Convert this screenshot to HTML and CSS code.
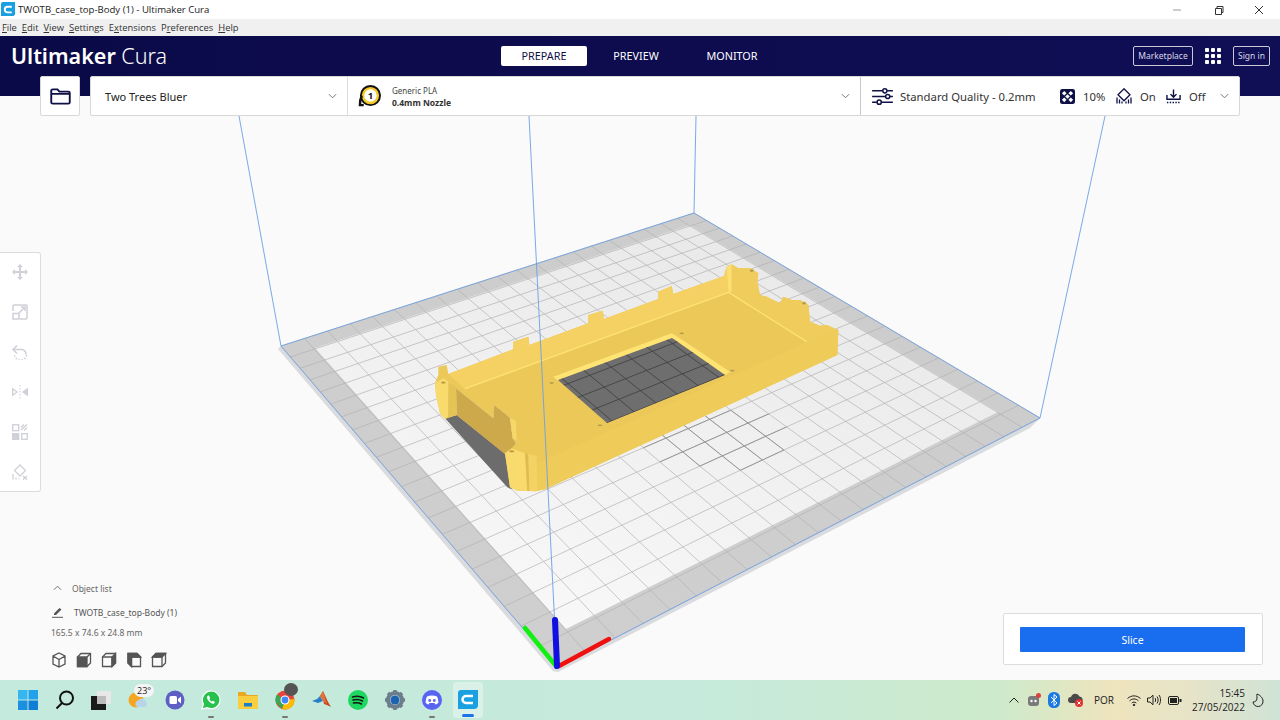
FILE: index.html
```html
<!DOCTYPE html>
<html lang="en">
<head>
<meta charset="utf-8">
<title>TWOTB_case_top-Body (1) - Ultimaker Cura</title>
<link rel="stylesheet" href="styles.css">
</head>
<body>
<div class="titlebar">
  <svg class="title-icon" viewBox="0 0 16 16" width="15" height="15"><path d="M2 0h13v12a3 3 0 0 1-3 3H0V2a2 2 0 0 1 2-2z" fill="#1aa0e0"/><path d="M11.5 5H7a2.5 2.5 0 0 0 0 6h4.5" fill="none" stroke="#fff" stroke-width="2"/></svg>
  <span class="title-text">TWOTB_case_top-Body (1) - Ultimaker Cura</span>
  <div class="winctl">
    <svg viewBox="0 0 10 10" width="10" height="10"><path d="M1 5h8" stroke="#9a9a9a" fill="none"/></svg>
    <svg class="ctl-restore" viewBox="0 0 10 10" width="10" height="10"><path d="M1.500 3.500h6v6h-6zM3 3.500V1.500h6v6H7.500" stroke="#333" fill="none"/></svg>
    <svg viewBox="0 0 10 10" width="10" height="10"><path d="M1 1l8 8M9 1l-8 8" stroke="#333" fill="none"/></svg>
  </div>
</div>
<nav class="menubar">
  <span><u>F</u>ile</span><span><u>E</u>dit</span><span><u>V</u>iew</span><span><u>S</u>ettings</span><span>E<u>x</u>tensions</span><span>P<u>r</u>eferences</span><span><u>H</u>elp</span>
</nav>
<header class="header">
  <div class="header-row">
    <div class="logo"><b>Ultimaker</b> <span>Cura</span></div>
    <div class="tabs">
      <span class="tab tab-active">PREPARE</span>
      <span class="tab tab-preview">PREVIEW</span>
      <span class="tab tab-monitor">MONITOR</span>
    </div>
    <div class="header-right">
      <span class="outline-btn market">Marketplace</span>
      <svg class="apps" viewBox="0 0 16 16" width="16" height="16" fill="#fff"><rect x="0" y="0" width="4" height="4" rx="1"/><rect x="6" y="0" width="4" height="4" rx="1"/><rect x="12" y="0" width="4" height="4" rx="1"/><rect x="0" y="6" width="4" height="4" rx="1"/><rect x="6" y="6" width="4" height="4" rx="1"/><rect x="12" y="6" width="4" height="4" rx="1"/><rect x="0" y="12" width="4" height="4" rx="1"/><rect x="6" y="12" width="4" height="4" rx="1"/><rect x="12" y="12" width="4" height="4" rx="1"/></svg>
      <span class="outline-btn signin">Sign in</span>
    </div>
  </div>
  <div class="toolbar">
    <div class="folder-btn">
      <svg viewBox="0 0 22 18" width="21" height="17"><path d="M1.200 15V3a1.600 1.600 0 0 1 1.600-1.600h5l2 2.400h9.400a1.600 1.600 0 0 1 1.600 1.600V15a1.600 1.600 0 0 1-1.600 1.600H2.800A1.600 1.600 0 0 1 1.200 15zM1.200 6.200h19.600" fill="none" stroke="#0f1045" stroke-width="2"/></svg>
    </div>
    <div class="mainbar">
      <div class="cell cell-machine">
        <span class="machine-name">Two Trees Bluer</span>
        <svg class="chev" viewBox="0 0 10 6" width="9" height="6"><path d="M1 1l4 4 4-4" fill="none" stroke="#666"/></svg>
      </div>
      <div class="cell cell-material">
        <svg class="spool" viewBox="0 0 24 24" width="23" height="23"><circle cx="13" cy="11" r="10" fill="#f7c928" stroke="#111" stroke-width="2"/><path d="M4 11c-1.500 3-2 6-2 10h4" fill="none" stroke="#111" stroke-width="2.500"/><circle cx="13" cy="11" r="6.500" fill="#fff"/><text x="13" y="14.800" class="spool-num">1</text></svg>
        <div class="material-text"><span class="mat-name">Generic PLA</span><b class="mat-nozzle">0.4mm Nozzle</b></div>
        <svg class="chev chev-end" viewBox="0 0 10 6" width="9" height="6"><path d="M1 1l4 4 4-4" fill="none" stroke="#666"/></svg>
      </div>
      <div class="cell cell-settings">
        <svg class="ic-quality" viewBox="0 0 22 18" width="21" height="17" fill="none" stroke="#0f1045" stroke-width="1.600"><path d="M0 3h11M16 3h6M0 9h14M19 9h3M0 15h5M10 15h12"/><circle cx="13.500" cy="3" r="2.200"/><circle cx="16.500" cy="9" r="2.200"/><circle cx="7.500" cy="15" r="2.200"/></svg>
        <span class="quality">Standard Quality - 0.2mm</span>
        <svg class="ic-infill" viewBox="0 0 16 16" width="15" height="15"><rect width="16" height="16" rx="2.500" fill="#0f1045"/><g fill="#fff"><path d="M4.500 2l2.500 2.500L4.500 7 2 4.500zM11.500 2L14 4.500 11.500 7 9 4.500zM8 5.500L10.500 8 8 10.500 5.500 8zM4.500 9L7 11.500 4.500 14 2 11.500zM11.500 9l2.500 2.500-2.500 2.500L9 11.500z"/></g></svg>
        <span class="val val-infill">10%</span>
        <svg class="ic-support" viewBox="0 0 16 16" width="16" height="16" fill="none" stroke="#0f1045" stroke-width="1.300"><path d="M8 .8l6 6-6 6-6-6z"/><path d="M1 15.500V9.500M3.500 15.500v-4M6 15.500v-2M10 15.500v-2M12.500 15.500v-4M15 15.500V9.500"/></svg>
        <span class="val val-support">On</span>
        <svg class="ic-adhesion" viewBox="0 0 16 16" width="15" height="16" fill="none" stroke="#0f1045" stroke-width="1.500"><path d="M8 1v8M4.800 6L8 9.400 11.200 6M1 7v4.500h14V7"/><path d="M1 15h14" stroke-dasharray="1.500 1.500"/></svg>
        <span class="val val-adhesion">Off</span>
        <svg class="chev chev-last" viewBox="0 0 10 6" width="9" height="6"><path d="M1 1l4 4 4-4" fill="none" stroke="#666"/></svg>
      </div>
    </div>
  </div>
</header>
<main class="stage">
  <svg class="scene" viewBox="0 96 1280 584" width="1280" height="584">
    <defs>
      <clipPath id="holeclip"><polygon points="558,380 672,338 725,375 607,423"/></clipPath>
      <linearGradient id="bed" gradientUnits="userSpaceOnUse" x1="690" y1="225" x2="566" y2="630">
        <stop offset="0" stop-color="#e9e9e9"/><stop offset="1" stop-color="#f8f8f8"/>
      </linearGradient>
      <linearGradient id="band" gradientUnits="userSpaceOnUse" x1="690" y1="213" x2="566" y2="668">
        <stop offset="0" stop-color="#cccccc"/><stop offset="1" stop-color="#cfcfcf"/>
      </linearGradient>
    </defs>
    <polygon points="281,346 278,349 553,671 558,672 1030,428 1040,418 557,668" fill="#d9dbdf"/>
    <polygon points="281,346 694,213 1040,418 557,668" fill="url(#band)"/>
    <polygon points="315,348 690,225 998,412 566,629" fill="url(#bed)"/>
    <g id="grid" stroke="#b2b2b2" stroke-width=".7" fill="none"></g>
    <g id="moire" stroke="#8a8a8a" stroke-width=".8" fill="none"></g>
    <path d="M281 346L694 213L1040 418L557 668Z" fill="none" stroke="#6b9fe8" stroke-width=".8"/>
    <g class="volume" stroke="#6b9fe8" stroke-width=".9"><path d="M281 346L239 116M694 213L696 116M1040 418L1105 116"/></g>
    <g transform="translate(420 250) scale(.33333)">
      <path fill="#6c6c6c" d="M75 505L110 495L260 615L275 718L262 712Z"/>
      <path fill="#ecc858" d="M45 400L55 375L55 350L80 345L85 372L280 298L280 275L325 260L328 285L505 220L505 195L548 182L552 207L715 147L715 125L755 108L760 132L912 78L920 50L935 43L955 55L990 55L1015 70L1012 95L1020 135L1040 140L1080 160L1090 140L1115 150L1140 150L1165 165L1170 215L1200 227L1220 225L1255 240L1252 315L375 718L345 724L292 722L270 712L255 610L288 580L278 565L270 503L222 465L220 505L108 415L110 495L75 507L60 490L48 435Z"/>
      <path fill="#f4d162" d="M85 372L280 298L280 275L325 260L328 285L505 220L505 195L548 182L552 207L715 147L715 125L755 108L760 132L912 78L920 50L925 125L135 418Z"/>
      <path fill="#efcc5c" d="M925 125L935 43L955 55L990 55L1015 70L1012 95L1020 135L1040 140L1080 160L1090 140L1115 150L1140 150L1165 165L1170 215L1200 227L1220 225L1255 240L1160 277Z"/>
      <path fill="#efcb5a" d="M1160 277L1255 240L1252 315L375 718L345 724L340 645Z"/>
      <path fill="#fbdf72" d="M920 50L935 43L935 125L925 125Z"/>
      <path fill="none" stroke="#fde272" stroke-width="4" d="M135 416L926 127L1160 275"/>
      <path fill="#cda94c" d="M108 415L220 505L222 465L270 503L278 565L288 580L258 615L110 495Z"/>
      <path fill="#f6d76a" d="M270 503L288 512L290 572L278 565Z"/>
      <path fill="#f9da6c" d="M45 400L70 385L92 400L88 498L75 507L60 490L48 435Z"/>
      <path fill="#e6c355" d="M85 395L108 410L110 495L84 503Z"/>
      <path fill="#f9da6c" d="M255 610L275 595L315 610L322 722L292 722L270 712Z"/>
      <path fill="#e0bc50" d="M315 610L325 612L328 722L322 722Z"/>
      <path fill="#f5d264" d="M325 612L350 618L352 724L328 722Z"/>
      <path fill="#ffe474" d="M400 380L755 250L775 262L415 393Z"/>
      <path fill="#ffe474" d="M755 262L775 262L930 365L915 375Z"/>
      <g fill="#b79a48" stroke="#f6d568" stroke-width="2">
        <ellipse cx="395" cy="399" rx="8" ry="4"/><ellipse cx="785" cy="250" rx="8" ry="4"/><ellipse cx="937" cy="362" rx="8" ry="4"/><ellipse cx="540" cy="526" rx="8" ry="4"/>
        <ellipse cx="70" cy="398" rx="7" ry="4"/><ellipse cx="995" cy="62" rx="7" ry="5"/><ellipse cx="1152" cy="160" rx="7" ry="5"/><ellipse cx="275" cy="604" rx="8" ry="4"/>
      </g>
    </g>
    <polygon points="558,380 672,338 725,375 607,423" fill="#6e6e6e"/>
    <g id="holegrid" clip-path="url(#holeclip)" stroke="#3e3e3e" stroke-width=".8" fill="none"></g>
    <path d="M557 668L529 116" stroke="#6b9fe8" stroke-width=".9" fill="none"/>
    <g fill="none" stroke-linecap="round">
      <path d="M525 628L556 666" stroke="#12f012" stroke-width="4.500"/>
      <path d="M609 639L559 666" stroke="#f01010" stroke-width="4.500"/>
      <path d="M555 620L557 666" stroke="#1010e0" stroke-width="6"/>
    </g>
  </svg>

  <aside class="toolpanel">
    <svg viewBox="0 0 16 16" width="16" height="16" fill="#cfd0d8"><path d="M8 0l3 3H9v4h4V5l3 3-3 3V9H9v4h2l-3 3-3-3h2V9H3v2L0 8l3-3v2h4V3H5z"/></svg>
    <svg viewBox="0 0 16 16" width="16" height="16" fill="none" stroke="#cfd0d8" stroke-width="1.500"><path d="M1 7V2a1 1 0 0 1 1-1h12a1 1 0 0 1 1 1v12a1 1 0 0 1-1 1H8"/><rect x="1" y="9.500" width="6" height="5.500"/><path d="M7 9l6-6M9 3h4v4"/></svg>
    <svg viewBox="0 0 16 16" width="16" height="16" fill="none" stroke="#cfd0d8" stroke-width="1.500"><path d="M1 5.500h9a5 5 0 0 1 4 5"/><path d="M5 1.500L1 5.500l4 4"/><path d="M14.500 11a6 5 0 0 1-12 0" stroke-dasharray="1.500 1.500"/></svg>
    <svg viewBox="0 0 16 16" width="16" height="16" fill="#cfd0d8"><path d="M0 3.500l6 4.500-6 4.500zM1.300 6v4L4 8z" fill-rule="evenodd"/><path d="M16 3.500L10 8l6 4.500z"/><path d="M8 1v14" stroke="#cfd0d8" stroke-dasharray="1.500 1.500" fill="none"/></svg>
    <svg viewBox="0 0 16 16" width="16" height="16" fill="none" stroke="#cfd0d8" stroke-width="1.300"><rect x=".7" y=".7" width="6" height="6"/><path d="M9 6l6-5.500M9 3.500l3-3M12 6.500l3-3"/><rect x="0" y="9" width="7.300" height="7" fill="#cfd0d8" stroke="none"/><rect x="9.700" y="9.700" width="5.600" height="5.600"/></svg>
    <svg viewBox="0 0 16 16" width="16" height="16" fill="none" stroke="#cfd0d8" stroke-width="1.300"><path d="M8 1l5.500 5.500L8 12 2.500 6.500z"/><path d="M1 15.500V10M4 15.500v-2M7 15.500v-1"/><path d="M11 12l4 3.500M15 12l-4 3.500" stroke-width="1.500"/></svg>
  </aside>

  <section class="objects">
    <div class="obj-row obj-head">
      <svg viewBox="0 0 10 6" width="9" height="6"><path d="M1 5l4-4 4 4" fill="none" stroke="#666"/></svg>
      <span>Object list</span>
    </div>
    <div class="obj-row obj-name">
      <svg viewBox="0 0 12 12" width="12" height="12"><path d="M2 7.500L7.500 2 9.500 3.500 4 9H2z" fill="#555"/><path d="M0 11.300h11" stroke="#555" fill="none"/></svg>
      <span>TWOTB_case_top-Body (1)</span>
    </div>
    <div class="obj-dim">165.5 x 74.6 x 24.8 mm</div>
    <div class="views">
      <svg viewBox="0 0 16 16" width="16" height="16" fill="none" stroke="#555" stroke-width="1.300"><path d="M8 1l6 3v8l-6 3-6-3V4zM2 4l6 3.500L14 4M8 7.500V15"/></svg>
      <svg viewBox="0 0 16 16" width="16" height="16" fill="none" stroke="#555" stroke-width="1.300"><path d="M1.500 5L5 1.500h9.500V11L11 14.500H1.500z"/><path d="M1.500 5H11v9.500H1.500z" fill="#555"/><path d="M11 5l3.500-3.500"/></svg>
      <svg viewBox="0 0 16 16" width="16" height="16" fill="none" stroke="#555" stroke-width="1.300"><path d="M1.500 5L5 1.500h9.500V11L11 14.500H1.500z"/><path d="M1.500 5H11v9.500"/><path d="M11 14.500V5l3.500-3.500V11z" fill="#555"/></svg>
      <svg viewBox="0 0 16 16" width="16" height="16" fill="none" stroke="#555" stroke-width="1.300"><path d="M2 1.500h9l3.500 3.500v9.500H5.500L2 11z"/><path d="M14.500 5H5.500v9.500"/><path d="M2 1.500h9l3.500 3.500H5.500V14.500L2 11z" fill="#555"/></svg>
      <svg viewBox="0 0 16 16" width="16" height="16" fill="none" stroke="#555" stroke-width="1.300"><path d="M1.500 5L5 1.500h9.500V11L11 14.500H1.500z"/><path d="M1.500 5H11v9.500"/><path d="M1.500 5L5 1.500h9.500L11 5z" fill="#555"/></svg>
    </div>
  </section>

  <section class="slice-panel">
    <button class="slice-btn">Slice</button>
  </section>
</main>
<footer class="taskbar">
  <div class="task-icons">
    <svg viewBox="0 0 20 20" width="20" height="20"><rect x="0" y="0" width="9.500" height="9.500" fill="#37b5ef"/><rect x="10.500" y="0" width="9.500" height="9.500" fill="#22a2ea"/><rect x="0" y="10.500" width="9.500" height="9.500" fill="#1b90e0"/><rect x="10.500" y="10.500" width="9.500" height="9.500" fill="#0f7ed6"/></svg>
    <svg viewBox="0 0 20 20" width="20" height="20" fill="none" stroke="#111" stroke-width="2"><circle cx="11.500" cy="8" r="6.500"/><path d="M7 13l-5.500 5.500"/></svg>
    <svg viewBox="0 0 20 20" width="20" height="20"><rect x="6" y="1" width="14" height="13" fill="#e8e8e8"/><rect x="0" y="6" width="15" height="14" fill="#1a1a1a"/><rect x="6" y="6" width="9" height="8" fill="#bcbcbc"/></svg>
    <span class="weather">
      <svg viewBox="0 0 20 20" width="20" height="20"><circle cx="8" cy="10" r="7.500" fill="#f5a623"/><path d="M8 16a4 4 0 0 1 3-6 4 4 0 0 1 7 2 3 3 0 0 1-1 5H9z" fill="#b8d4ea"/></svg>
      <i class="temp">23°</i>
    </span>
    <svg viewBox="0 0 20 20" width="20" height="20"><circle cx="10" cy="10" r="9.500" fill="#5e5fc4"/><rect x="4.500" y="6" width="7.500" height="8" rx="1.500" fill="#fff"/><path d="M13 9l3-2.500v7L13 11z" fill="#fff"/></svg>
    <span class="dotted">
      <svg viewBox="0 0 20 20" width="20" height="20"><path d="M1 19l1.400-5A8.800 8.800 0 1 1 6 17.600z" fill="#27c24c" stroke="#fff" stroke-width="1.200"/><path d="M7 5.500c-1.500 1-1.300 3 .5 5.300 2 2.300 4 3.300 5.500 2.700l1-1.500-2.200-1.300-1 .9c-1-.4-2-1.600-2.400-2.600l.8-1L7.800 5.500z" fill="#fff"/></svg>
    </span>
    <svg viewBox="0 0 20 18" width="20" height="18"><path d="M0 2a1 1 0 0 1 1-1h6l2 3h10a1 1 0 0 1 1 1v3H0z" fill="#e9a820"/><rect x="0" y="5" width="20" height="13" fill="#f9cf3f"/><rect x="6" y="12" width="8" height="3.500" fill="#1e7fc8"/></svg>
    <span class="chrome dotted">
      <svg viewBox="0 0 20 20" width="20" height="20"><circle cx="10" cy="10" r="9.500" fill="#e8453c"/><path d="M10 10L1.500 14A9.500 9.500 0 0 1 2 4.500z" fill="#3aa757"/><path d="M10 10l9.500-1A9.500 9.500 0 0 1 7 19z" fill="#fbbc04"/><path d="M2 14l5 5 3-9z" fill="#3aa757"/><circle cx="10" cy="10" r="4.500" fill="#fff"/><circle cx="10" cy="10" r="3.400" fill="#4285f4"/></svg>
      <i class="avatar"></i>
    </span>
    <svg viewBox="0 0 20 20" width="20" height="20"><path d="M0 11l5-2 3-3 3 5-5 2z" fill="#2a7fc8"/><path d="M8 6l3-5 5 11 3 5-4-2-3-1-1-5z" fill="#c8421c"/><path d="M11 1l-3 5 3 5 4 3z" fill="#e0743a"/></svg>
    <svg viewBox="0 0 20 20" width="20" height="20"><circle cx="10" cy="10" r="10" fill="#1ed760"/><path d="M4.500 7c4-1 8-.8 11 1M5 10c3.500-.8 7-.5 9.500 1M5.500 13c3-.6 5.500-.4 8 1" fill="none" stroke="#191414" stroke-width="1.500" stroke-linecap="round"/></svg>
    <svg viewBox="0 0 20 20" width="20" height="20"><circle cx="10" cy="10" r="7" fill="none" stroke="#6d7d8c" stroke-width="4"/><path d="M10 0v4M10 16v4M0 10h4M16 10h4M3 3l3 3M14 14l3 3M17 3l-3 3M3 17l3-3" stroke="#6d7d8c" stroke-width="3.500"/><circle cx="10" cy="10" r="4.500" fill="#1c62b0"/></svg>
    <span class="dotted">
      <svg viewBox="0 0 20 20" width="20" height="20"><circle cx="10" cy="10" r="10" fill="#5865f2"/><path d="M5 6.500c3-1.500 7-1.500 10 0 1 2 1.500 4.500 1.300 6.500-1 .7-2 1.200-3 1.400l-.8-1.400h-5l-.8 1.400c-1-.2-2-.7-3-1.400C3.500 11 4 8.500 5 6.500z" fill="#fff"/><circle cx="7.700" cy="10.500" r="1.400" fill="#5865f2"/><circle cx="12.300" cy="10.500" r="1.400" fill="#5865f2"/></svg>
    </span>
    <span class="task-active">
      <svg viewBox="0 0 20 20" width="20" height="20"><path d="M3 0h17v15a4 4 0 0 1-4 4H0V3a3 3 0 0 1 3-3z" fill="#1aa0e0"/><path d="M15 6H8a3.500 3.500 0 0 0 0 7h7" fill="none" stroke="#fff" stroke-width="2.500"/></svg>
      <i class="active-bar"></i>
    </span>
  </div>
  <div class="tray">
    <svg class="t-up" viewBox="0 0 10 6" width="10" height="6"><path d="M.5 5.500L5 1l4.500 4.500" fill="none" stroke="#222"/></svg>
    <svg class="t-dc" viewBox="0 0 14 14" width="14" height="14"><rect x="1" y="3" width="11" height="10" rx="3" fill="#7a7a7a"/><circle cx="4.500" cy="8" r="1.200" fill="#fff"/><circle cx="8.500" cy="8" r="1.200" fill="#fff"/><circle cx="11.500" cy="2.500" r="2.500" fill="#e04040"/></svg>
    <svg class="t-bt" viewBox="0 0 12 16" width="12" height="16"><rect width="12" height="16" rx="5.500" fill="#1a7ae0"/><path d="M3 5l6 6-3 2.500v-11L9 5l-6 6" fill="none" stroke="#fff"/></svg>
    <svg class="t-cloud" viewBox="0 0 16 14" width="16" height="14"><path d="M3 10a3 3 0 0 1 0-6 4.500 4.500 0 0 1 8.500-.5A3.500 3.500 0 0 1 13 10z" fill="#4a4a4a"/><circle cx="11" cy="10" r="4" fill="#e03030"/><path d="M9.500 8.500l3 3M12.500 8.500l-3 3" stroke="#fff"/></svg>
    <span class="lang">POR</span>
    <svg class="t-wifi" viewBox="0 0 14 11" width="14" height="11" fill="none" stroke="#222"><path d="M.5 3.500c4-3.500 9-3.500 13 0M2.500 5.800c3-2.500 6-2.500 9 0M4.700 8c1.500-1.200 3-1.200 4.600 0"/><circle cx="7" cy="10" r=".8" fill="#222"/></svg>
    <svg class="t-vol" viewBox="0 0 14 12" width="14" height="12" fill="none" stroke="#222"><path d="M.5 4h2.500L6 1.200v9.600L3 8H.5zM8 4c.8 1 .8 3 0 4M10 2.500c1.500 2 1.500 5 0 7M12 1c2 2.500 2 7.500 0 10"/></svg>
    <svg class="t-bat" viewBox="0 0 14 9" width="14" height="9"><rect x=".5" y=".5" width="10" height="8" rx="1.500" fill="none" stroke="#222"/><rect x="2" y="2" width="7" height="5" fill="#222"/><rect x="11.500" y="3" width="2" height="3" fill="#222"/></svg>
    <div class="clock"><span>15:45</span><span>27/05/2022</span></div>
    <svg class="t-moon" viewBox="0 0 12 14" width="12" height="14"><path d="M5 1c3 1 6 4 6 7a5 5 0 0 1-10 1c2 0 4-1 4-4 0-2-.5-3 0-4z" fill="none" stroke="#222"/></svg>
  </div>
</footer>
<script src="scene.js"></script>
</body>
</html>
```
FILE: styles.css
```css
* { box-sizing: border-box; }
html, body { margin: 0; height: 720px; overflow: hidden; }
body {
  width: 1280px;
  display: flex;
  flex-direction: column;
  font-family: "Noto Sans", "Open Sans", sans-serif;
  background: #fafafa;
  color: #0f1045;
}
i { font-style: normal; }

.titlebar { height: 19px; background: #fff; display: flex; align-items: center; padding-left: 1px; }
.title-icon { margin-right: 2px; }
.title-text { font: 9.600px "Open Sans", sans-serif; color: #222; }
.winctl { margin-left: auto; display: flex; gap: 32px; padding-right: 16px; }
.ctl-restore { margin-right: -2px; }

.menubar { height: 17px; background: #f0f0f0; display: flex; gap: 5px; align-items: center; padding-left: 2px; font: 9.400px "Open Sans", sans-serif; color: #333; }

.header { height: 60px; padding-top: 10px; background: linear-gradient(90deg, #0b0a48, #100e55); position: relative; z-index: 2; }
.header-row { height: 20px; display: grid; grid-template-columns: 1fr auto 1fr; padding: 0 10px; align-items: center; }
.logo { font-size: 21.500px; line-height: 20px; color: #fff; white-space: nowrap; margin-left: 1px; }
.logo b { font-weight: 600; }
.logo span { font-weight: 300; }
.tabs { display: flex; align-items: center; height: 20px; }
.tab { font-size: 10.800px; color: #fff; height: 20px; line-height: 20px; text-align: center; }
.tab-active { width: 86px; background: #fff; color: #0f1045; border-radius: 2px; }
.tab-preview { width: 98px; }
.tab-monitor { width: 94px; }
.header-right { display: flex; align-items: center; justify-content: flex-end; gap: 12px; }
.outline-btn { height: 20px; line-height: 18px; border: 1px solid #c9c9d8; border-radius: 2px; font-size: 8.500px; color: #d8d8e6; text-align: center; }
.market { width: 60px; }
.signin { width: 37px; }

.toolbar { display: flex; gap: 10px; margin: 10px 40px 0; height: 40px; }
.folder-btn { width: 40px; height: 40px; background: #fff; border: 1px solid #d8d8d8; border-radius: 2px; display: flex; align-items: center; justify-content: center; }
.mainbar { flex: 1; display: flex; background: #fff; border: 1px solid #d8d8d8; border-radius: 2px; }
.cell { display: flex; align-items: center; height: 100%; }
.cell-machine { width: 257px; padding: 0 10px 0 14px; border-right: 1px solid #dcdcdc; font-size: 11px; }
.machine-name { color: #222; }
.chev { flex: none; margin-left: auto; }
.cell-material { width: 513px; padding: 0 10px 0 10px; border-right: 1px solid #c8c8c8; }
.spool { flex: none; margin-right: 11px; }
.spool-num { font-size: 10px; font-weight: 700; fill: #111; text-anchor: middle; }
.material-text { display: flex; flex-direction: column; line-height: 12px; padding-top: 1px; }
.mat-name { font-size: 8px; color: #444; }
.mat-nozzle { font-size: 8.500px; color: #333; }
.cell-settings { flex: 1; padding: 0 10px 0 11px; font-size: 11.300px; color: #333; }
.ic-quality { margin-right: 7px; }
.quality { width: 160px; white-space: nowrap; }
.ic-infill { margin-right: 8px; }
.val { white-space: nowrap; }
.val-infill { width: 33px; }
.ic-support { margin-right: 8px; }
.val-support { width: 26px; }
.ic-adhesion { margin-right: 8px; }

.stage { flex: 1; position: relative; background: #fafafa; overflow: hidden; }
.scene { position: absolute; inset: 0; display: block; }
.toolpanel { position: absolute; left: 0; top: 156px; width: 41px; height: 240px; background: #fff; border: 1px solid #dcdcdc; border-left: 0; border-radius: 0 3px 3px 0; display: flex; flex-direction: column; align-items: center; justify-content: center; gap: 24px; }

.objects { position: absolute; left: 51px; top: 485px; font-size: 8.500px; color: #666; }
.obj-row { display: flex; align-items: center; }
.obj-head { height: 14px; padding-left: 2px; gap: 10px; }
.obj-name { margin-top: 10px; height: 14px; padding-left: 1px; gap: 10px; color: #555; }
.obj-dim { margin-top: 7px; height: 14px; line-height: 14px; }
.views { display: flex; gap: 9px; margin-top: 12px; }

.slice-panel { position: absolute; left: 1003px; top: 517px; width: 260px; height: 52px; background: #fff; border: 1px solid #dcdcdc; border-radius: 2px; padding: 13px 17px 0 16px; }
.slice-btn { display: block; width: 225px; height: 25px; border: 0; padding: 0; background: #196ef0; color: #fff; font: 10.500px "Noto Sans", sans-serif; border-radius: 1px; }

.taskbar { height: 40px; display: flex; justify-content: space-between; align-items: center; background: linear-gradient(90deg, #c3eadd 0%, #c6eadb 55%, #cdeacb 78%, #eee4bd 87%, #e6e3c8 93%, #cfe3d6 100%); color: #222; }
.task-icons { display: flex; align-items: center; margin-left: 18px; gap: 16.700px; }
.weather, .chrome, .dotted, .task-active { position: relative; display: block; width: 20px; height: 20px; }
.dotted::after { content: ""; position: absolute; left: 7px; top: 26px; width: 6px; height: 2px; border-radius: 1px; background: #777; }
.temp { position: absolute; left: 6px; top: -6px; width: 20px; height: 13px; border-radius: 7px; background: #f5f5f5; font: 9px/13px "Open Sans", sans-serif; text-align: center; color: #222; }
.avatar { position: absolute; left: 9px; top: -7px; width: 14px; height: 13px; border-radius: 50%; background: #555; }
.active-bar { position: absolute; left: 4px; top: 24px; width: 12px; height: 3px; border-radius: 2px; background: #1a73e8; }
.task-active::before { content: ""; position: absolute; left: -5px; top: -8px; width: 30px; height: 36px; background: rgba(255,255,255,.35); border-radius: 3px; }
.task-active svg { position: relative; }
.tray { display: flex; align-items: center; }
.t-up { margin-right: 8px; }
.t-dc { margin-right: 7px; }
.t-bt { margin-right: 8px; }
.t-cloud { margin-right: 10px; }
.lang { font: 10px "Open Sans", sans-serif; width: 33px; }
.t-wifi { margin-right: 6px; }
.t-vol { margin-right: 7px; }
.t-bat { margin-right: 11px; }
.clock { display: flex; flex-direction: column; align-items: flex-end; font: 10px/14px "Open Sans", sans-serif; width: 52px; margin-right: 7px; }
.t-moon { margin-right: 16px; }
```
FILE: scene.js
```js
(function () {
  var NS = 'http://www.w3.org/2000/svg';
  var p = [[281, 346], [694, 213], [1040, 418], [557, 668]];
  var dx1 = p[1][0] - p[2][0], dx2 = p[3][0] - p[2][0], dx3 = p[0][0] - p[1][0] + p[2][0] - p[3][0];
  var dy1 = p[1][1] - p[2][1], dy2 = p[3][1] - p[2][1], dy3 = p[0][1] - p[1][1] + p[2][1] - p[3][1];
  var den = dx1 * dy2 - dx2 * dy1;
  var g = (dx3 * dy2 - dx2 * dy3) / den, h = (dx1 * dy3 - dx3 * dy1) / den;
  var a = p[1][0] - p[0][0] + g * p[1][0], b = p[3][0] - p[0][0] + h * p[3][0], c = p[0][0];
  var d = p[1][1] - p[0][1] + g * p[1][1], e = p[3][1] - p[0][1] + h * p[3][1], f = p[0][1];
  function pt(u, v) {
    var w = g * u + h * v + 1;
    return [(a * u + b * v + c) / w, (d * u + e * v + f) / w];
  }
  function str(q) { return q[0].toFixed(1) + ' ' + q[1].toFixed(1); }
  function add(id, path) {
    var el = document.createElementNS(NS, 'path');
    el.setAttribute('d', path);
    document.getElementById(id).appendChild(el);
  }
  var n = 21, path = '', dark = '';
  function seg(q0, q1) {
    var s = 'M' + str(q0) + 'L' + str(q1);
    var mx = (q0[0] + q1[0]) / 2 - 722, my = (q0[1] + q1[1]) / 2 - 442;
    if ((mx * mx) / 4900 + (my * my) / 1000 < 1) dark += s;
    return s;
  }
  for (var i = 0; i <= n; i++) {
    for (var j = 0; j < n; j++) {
      path += seg(pt(i / n, j / n), pt(i / n, (j + 1) / n));
      path += seg(pt(j / n, i / n), pt((j + 1) / n, i / n));
    }
  }
  add('grid', path);
  add('holegrid', path);
  add('moire', dark);
})();
```
